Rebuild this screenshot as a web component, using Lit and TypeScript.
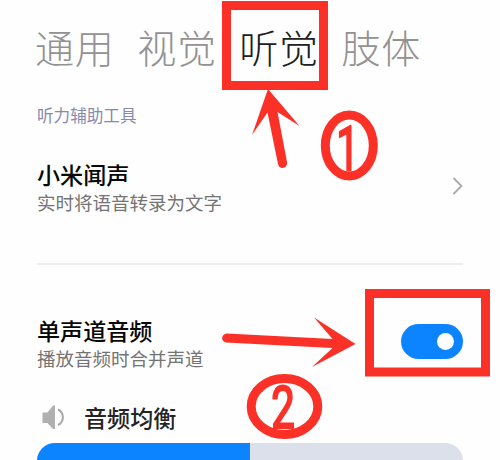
import { LitElement, html, css } from "lit";
import { customElement } from "lit/decorators.js";

@customElement("app-root")
export class AppRoot extends LitElement {
  static styles = css`
    :host {
      display: block;
      position: relative;
      width: 500px;
      height: 460px;
      overflow: hidden;
      background: #fefefe;
      font-family: "Noto Sans CJK SC", sans-serif;
      color: #080808;
    }
    .page {
      padding: 24px 37px 0 37px;
    }
    .tabs {
      display: flex;
      gap: 22.6px;
      height: 44px;
      margin-left: -2px;
      font-size: 39.1px;
      letter-spacing: 0.7px;
      line-height: 44px;
      font-weight: 300;
      color: #929292;
      white-space: nowrap;
    }
    .active {
      color: #202024;
    }
    .section {
      margin-top: 37px;
      height: 20px;
      font-size: 16.6px;
      line-height: 20px;
      color: #858aaf;
    }
    .row {
      display: flex;
      align-items: center;
      justify-content: space-between;
      height: 54px;
    }
    .first {
      margin-top: 35px;
    }
    .title {
      height: 30px;
      font-size: 23.1px;
      line-height: 28px;
      font-weight: 500;
    }
    .sub {
      height: 24px;
      font-size: 18.5px;
      line-height: 24px;
      color: #747474;
    }
    .chevron {
      width: 12px;
      height: 20px;
      margin: 0 0 2px 0;
    }
    .divider {
      height: 2px;
      margin: 49px 0 51px;
      background: #eeeeee;
    }
    .switch {
      display: flex;
      align-items: center;
      justify-content: flex-end;
      box-sizing: border-box;
      width: 62px;
      height: 35px;
      margin-top: -3px;
      padding-right: 9px;
      border-radius: 18px;
      background: #0d84ff;
    }
    .knob {
      width: 17px;
      height: 17px;
      border-radius: 50%;
      background: #fff;
    }
    .balance {
      display: flex;
      align-items: center;
      margin-top: 31px;
      height: 34px;
      color: #242424;
    }
    .speaker {
      width: 24px;
      height: 26px;
      margin: 0 19px 2px 4px;
    }
    .slider {
      margin-top: 8px;
      height: 40px;
      border-radius: 18px;
      background: #dce0eb;
      overflow: hidden;
    }
    .fill {
      width: 50%;
      height: 100%;
      background: #0d84ff;
    }
    .marks {
      position: absolute;
      inset: 0;
      width: 500px;
      height: 460px;
    }
    .num {
      font-family: Roboto, sans-serif;
      font-weight: 400;
      font-size: 60px;
      text-anchor: middle;
      fill: #fb3027;
      stroke: #fb3027;
      stroke-width: 2.2;
      stroke-linejoin: round;
    }
  `;

  render() {
    return html`
      <div class="page">
        <div class="tabs">
          <span>通用</span><span>视觉</span><span class="active">听觉</span><span>肢体</span>
        </div>
        <div class="section">听力辅助工具</div>
        <div class="row first">
          <div>
            <div class="title">小米闻声</div>
            <div class="sub">实时将语音转录为文字</div>
          </div>
          <svg class="chevron" viewBox="0 0 12 20">
            <path d="M2.5 2 L10.5 10 L2.5 18" fill="none" stroke="#aaa" stroke-width="1.8" />
          </svg>
        </div>
        <div class="divider"></div>
        <div class="row">
          <div>
            <div class="title">单声道音频</div>
            <div class="sub">播放音频时合并声道</div>
          </div>
          <div class="switch"><div class="knob"></div></div>
        </div>
        <div class="balance">
          <svg class="speaker" viewBox="0 0 24 26">
            <path d="M1.5 8.5H6.5L12 1.5H14V25H12L6.5 19H1.5Z" fill="#b0b0b0" />
            <path d="M17 5.5C23.5 8.5 23.5 18 17 21" fill="none" stroke="#a8a8a8" stroke-width="2" />
          </svg>
          <div class="title">音频均衡</div>
        </div>
        <div class="slider"><div class="fill"></div></div>
      </div>
      <svg class="marks" viewBox="0 0 500 460">
        <g fill="none" stroke="#fb3027" stroke-width="9">
          <rect x="226.5" y="5.5" width="97" height="80" />
          <rect x="369.5" y="293.5" width="116" height="78.5" />
          <ellipse cx="349.3" cy="145.5" rx="24" ry="30.5" />
          <ellipse cx="284.5" cy="406.5" rx="33.3" ry="28" />
        </g>
        <g fill="#fb3027">
          <path d="M268 89L299.5 126L277.5 112L287 162C288 169 279 170 278 164L267.5 112.5L252 135Z" />
          <path d="M355.5 344L312 367L332.5 348L226 342.5C220.5 341 221 334 227 333.5L332.5 339L314 317.5Z" />
        </g>
        <text class="num" transform="translate(347.6 169.5) scale(0.68 1.03)">1</text>
        <text class="num" transform="translate(283 427.5) scale(0.7 1)">2</text>
      </svg>
    `;
  }
}
